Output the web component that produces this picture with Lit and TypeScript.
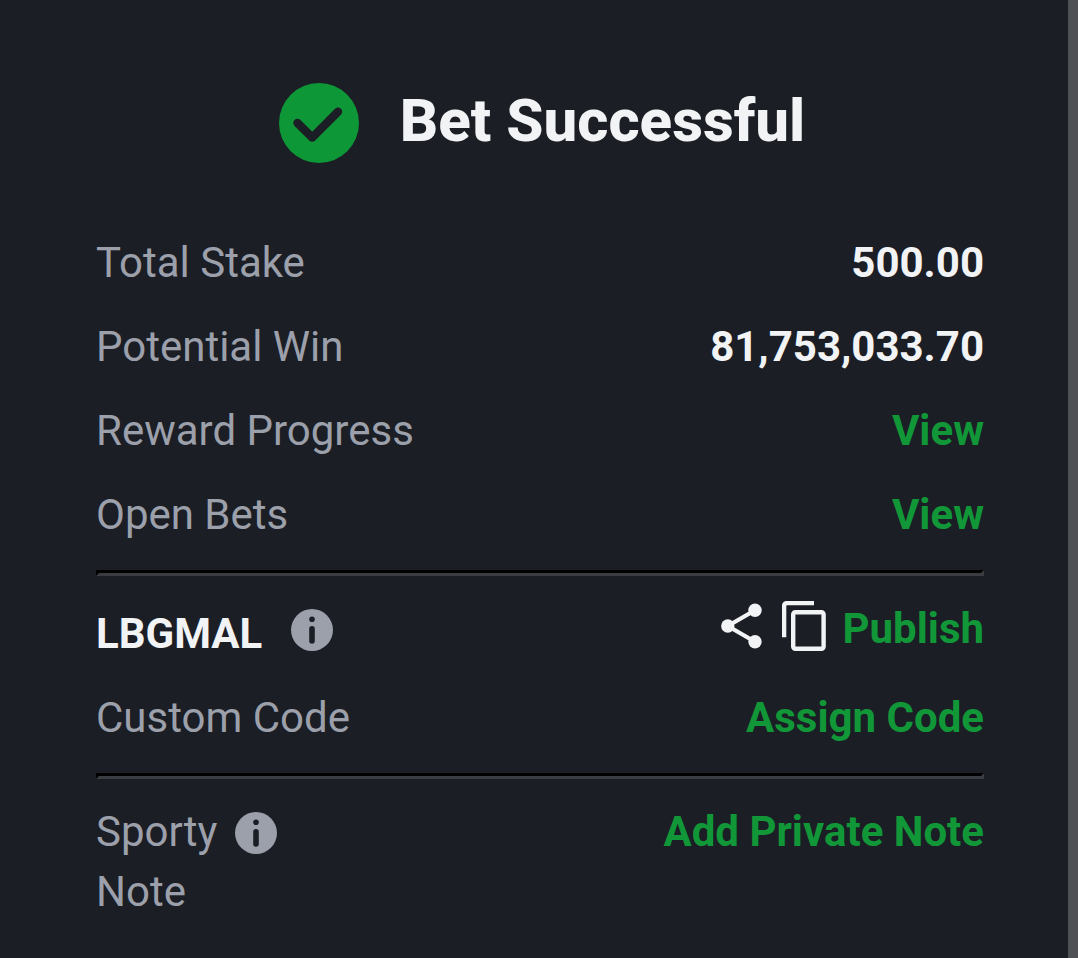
import { LitElement, html, css, nothing } from 'lit';
import { customElement, property } from 'lit/decorators.js';

@customElement('info-icon')
export class InfoIcon extends LitElement {
    static styles = css`
    :host {
        display: block;
        width: 42px;
        height: 42px;
    }

    svg {
        display: block;
    }
    `;

    render() {
        return html`
        <svg width="42" height="42" viewBox="0 0 42 42">
            <circle cx="21" cy="21" r="21" fill="#9ca0ab"></circle>
            <circle cx="21" cy="10.3" r="2.8" fill="#1b1e25"></circle>
            <rect x="18.2" y="17" width="5.6" height="17.8" rx="2.8" fill="#1b1e25"></rect>
        </svg>
        `;
    }
}

@customElement('slip-row')
export class SlipRow extends LitElement {
    static styles = css`
    :host {
        display: flex;
        justify-content: space-between;
        align-items: flex-start;
    }

    .label {
        color: #9ca0ab;
    }

    .value {
        color: #f2f3f5;
        font-weight: bold;
    }

    .link {
        color: #119738;
        font-weight: bold;
    }
    `;

    @property()
    label = '';

    @property()
    value = '';

    @property()
    link = '';

    render() {
        return html`
        <span class="label">${ this.label }</span>
        ${ this.value ? html`<span class="value">${ this.value }</span>` : nothing }
        ${ this.link ? html`<span class="link">${ this.link }</span>` : nothing }
        `;
    }
}

@customElement('app-root')
export class AppRoot extends LitElement {
    static styles = css`
    :host {
        display: flex;
        box-sizing: border-box;
        height: 958px;
        overflow: hidden;
        background: #1b1e25;
        font-family: Roboto, sans-serif;
        font-size: 42px;
        line-height: 60px;
        white-space: nowrap;
    }

    svg {
        display: block;
    }

    .slip {
        flex: 1;
        padding: 83px 84px 0 96px;
    }

    .edge {
        width: 10px;
        background: #505155;
    }

    .title {
        display: flex;
        justify-content: center;
        gap: 41px;
        height: 80px;
        margin-bottom: 70px;
        padding-left: 4px;
    }

    h1 {
        margin: 0;
        font-size: 60px;
        line-height: 76px;
        font-weight: 800;
        color: #f2f3f5;
    }

    .rows {
        display: flex;
        flex-direction: column;
        gap: 24px;
    }

    hr {
        margin: 25px 0 28px;
        height: 0;
        border: 3px solid;
        border-color: #000 #3a3c42 #3a3c42 #000;
    }

    .last {
        margin-bottom: 23px;
    }

    .row {
        display: flex;
        justify-content: space-between;
        align-items: flex-start;
    }

    .code {
        display: flex;
        gap: 28.6px;
        color: #f2f3f5;
        font-weight: bold;
    }

    .code info-icon {
        margin-top: 5px;
    }

    .actions {
        display: flex;
        height: 60px;
        margin-top: -5px;
    }

    .share {
        margin: 4px 20px 0 0;
    }

    .copy {
        margin: 2px 16.4px 0 0;
    }

    .link {
        color: #119738;
        font-weight: bold;
    }

    .note {
        display: flex;
        gap: 18px;
        color: #9ca0ab;
    }

    .note info-icon {
        margin-top: 10px;
    }
    `;

    render() {
        return html`
        <div class="slip">
            <div class="title">
                <svg width="80" height="80" viewBox="0 0 80 80">
                    <circle cx="40" cy="40" r="40" fill="#0d9737"></circle>
                    <path d="M18.5 40 L33.2 54.6 L59 28.8" fill="none" stroke="#1b1e25" stroke-width="8.4"
                        stroke-linecap="round" stroke-linejoin="round"></path>
                </svg>
                <h1>Bet Successful</h1>
            </div>

            <div class="rows">
                <slip-row label="Total Stake" value="500.00"></slip-row>
                <slip-row label="Potential Win" value="81,753,033.70"></slip-row>
                <slip-row label="Reward Progress" link="View"></slip-row>
                <slip-row label="Open Bets" link="View"></slip-row>
            </div>

            <hr>

            <div class="rows">
                <div class="row">
                    <div class="code">
                        <span>LBGMAL</span>
                        <info-icon></info-icon>
                    </div>
                    <div class="actions">
                        <svg class="share" width="41" height="46" viewBox="0 0 41 46">
                            <path d="M34 7.2 L6.8 23 L34 38.8" fill="none" stroke="#f2f3f5" stroke-width="4.2"></path>
                            <circle cx="6.8" cy="23" r="6.7" fill="#f2f3f5"></circle>
                            <circle cx="34" cy="7.2" r="6.7" fill="#f2f3f5"></circle>
                            <circle cx="34" cy="38.8" r="6.7" fill="#f2f3f5"></circle>
                        </svg>
                        <svg class="copy" width="44" height="50" viewBox="0 0 44 50">
                            <path d="M32 2.1 H5 Q2.1 2.1 2.1 5 V36.3" fill="none" stroke="#f2f3f5" stroke-width="4.4"></path>
                            <rect x="11.2" y="11.2" width="30.4" height="36.6" rx="2.2" fill="none" stroke="#f2f3f5" stroke-width="4.4"></rect>
                        </svg>
                        <span class="link">Publish</span>
                    </div>
                </div>
                <slip-row label="Custom Code" link="Assign Code"></slip-row>
            </div>

            <hr class="last">

            <div class="row">
                <div class="note">
                    <span>Sporty<br>Note</span>
                    <info-icon></info-icon>
                </div>
                <span class="link">Add Private Note</span>
            </div>
        </div>
        <div class="edge"></div>
        `;
    }
}

declare global {
    interface HTMLElementTagNameMap {
        'info-icon': InfoIcon;
        'slip-row': SlipRow;
        'app-root': AppRoot;
    }
}
